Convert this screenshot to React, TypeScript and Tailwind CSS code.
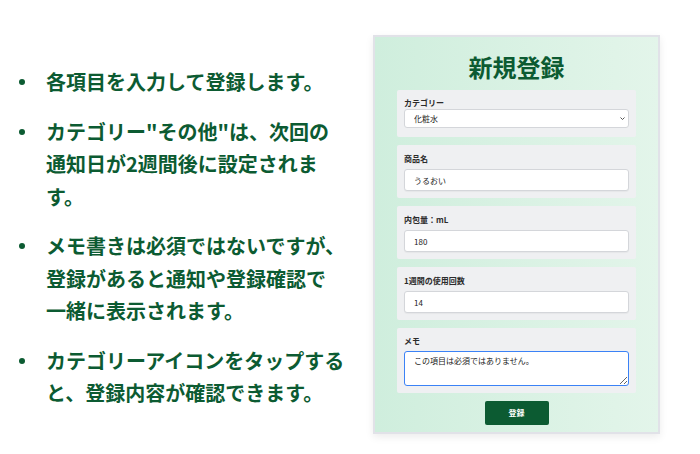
import React from 'react';

const notes: string[][] = [
  ['各項目を入力して登録します。'],
  ['カテゴリー"その他"は、次回の', '通知日が2週間後に設定されま', 'す。'],
  ['メモ書きは必須ではないですが、', '登録があると通知や登録確認で', '一緒に表示されます。'],
  ['カテゴリーアイコンをタップする', 'と、登録内容が確認できます。'],
];

const font = { fontFamily: '"Noto Sans CJK JP", "Noto Sans", sans-serif' };

const inputClass =
  'block w-full h-[22px] px-[9px] text-[8px] text-[#222] bg-white border border-[#d4d6da] rounded-[3px] shadow-[0_1px_1px_rgba(0,0,0,0.04)] focus:outline-none';

const Field: React.FC<{ label: string; children: React.ReactNode; className?: string }> = ({ label, children, className = '' }) => (
  <div className={`bg-[#eff0f2] rounded-[2px] px-[7px] pb-[7px] ${className}`}>
    <label className="block text-[8px] leading-[10px] font-bold text-[#2b2b2b]">{label}</label>
    {children}
  </div>
);

export default function App() {
  return (
    <div className="w-[700px] h-[454px] bg-white flex items-start" style={font}>
      <ul className="w-[346px] pl-[19px] pt-[66px] pr-[6px]">
        {notes.map((lines, i) => (
          <li key={i} className="flex mb-[17px]">
            <span className="w-[27px] h-[32px] flex items-center shrink-0">
              <span className="block w-[6px] h-[6px] rounded-full bg-[#0c5b32]" />
            </span>
            <span className="text-[20px] leading-[32.5px] font-bold text-[#0c5b32] whitespace-nowrap">
              {lines.map((line, j) => (
                <React.Fragment key={j}>
                  {j > 0 && <br />}
                  {line}
                </React.Fragment>
              ))}
            </span>
          </li>
        ))}
      </ul>

      <div className="mt-[35px] ml-[27px] w-[287px] h-[399px] border-2 border-[#e1e2e8] shadow-[0_3px_8px_rgba(0,0,0,0.08)] bg-gradient-to-r from-[#cfeedd] to-[#e3f5ea] px-[22px] pt-[14px]">
        <h1 className="text-center text-[24px] leading-[32px] font-bold text-[#0c5b32] mb-[7px]">新規登録</h1>

        <div className="flex flex-col gap-[8px]">
          <Field label="カテゴリー" className="pt-[8px] pb-[9px]">
            <div className="relative mt-[1px]">
              <select className="block w-full h-[19px] pl-[9px] text-[8px] text-[#222] bg-white border border-[#d4d6da] rounded-[3px] appearance-none focus:outline-none" defaultValue="化粧水">
                <option>化粧水</option>
                <option>乳液</option>
                <option>その他</option>
              </select>
              <svg className="absolute right-[4px] top-[7px] w-[5px] h-[5px] text-[#555]" viewBox="0 0 10 10" fill="none" stroke="currentColor" strokeWidth={2}>
                <path d="M1 3l4 4 4-4" />
              </svg>
            </div>
          </Field>

          <Field label="商品名" className="pt-[9px]">
            <input type="text" defaultValue="うるおい" className={`mt-[5px] ${inputClass}`} />
          </Field>

          <Field label="内包量：mL" className="pt-[9px]">
            <input type="text" defaultValue="180" className={`mt-[5px] ${inputClass}`} />
          </Field>

          <Field label="1週間の使用回数" className="pt-[9px]">
            <input type="text" defaultValue="14" className={`mt-[5px] ${inputClass}`} />
          </Field>

          <Field label="メモ" className="pt-[8px]">
            <textarea
              defaultValue="この項目は必須ではありません。"
              className="mt-[5px] block w-full h-[35px] px-[9px] py-[3px] text-[8px] leading-[12px] text-[#222] bg-white border-[1.5px] border-[#3b82f6] rounded-[3px] resize-y focus:outline-none"
            />
          </Field>
        </div>

        <div className="flex justify-center mt-[8px]">
          <button className="w-[64px] h-[24px] bg-[#0c5b32] text-white text-[8px] font-bold rounded-[2px]">登録</button>
        </div>
      </div>
    </div>
  );
}
